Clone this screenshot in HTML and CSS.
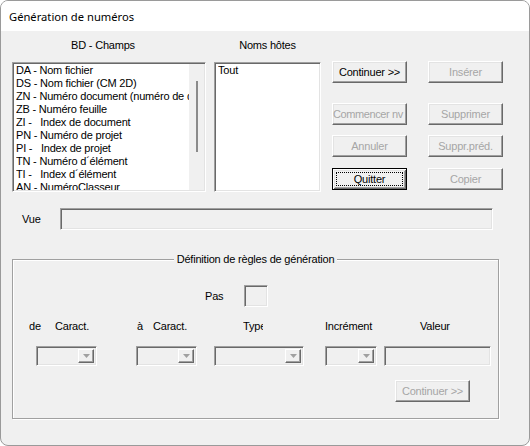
FILE: index.html
```html
<!DOCTYPE html>
<html lang="fr">
<head>
<meta charset="utf-8">
<title>Génération de numéros</title>
<link rel="stylesheet" href="styles.css">
</head>
<body>
<div class="window">
  <div class="titlebar">Génération de numéros</div>
  <div class="content">
    <div class="top">
      <div class="col col-fields">
        <div class="colhead colhead-fields">BD - Champs</div>
        <div class="listbox">
          <ul class="items">
            <li>DA - Nom fichier</li>
            <li>DS - Nom fichier (CM 2D)</li>
            <li>ZN - Numéro document (numéro de document)</li>
            <li>ZB - Numéro feuille</li>
            <li>ZI -   Index de document</li>
            <li>PN - Numéro de projet</li>
            <li>PI -   Index de projet</li>
            <li>TN - Numéro d´élément</li>
            <li>TI -   Index d´élément</li>
            <li>AN - NuméroClasseur</li>
          </ul>
          <div class="vscroll"><div class="thumb"></div></div>
        </div>
      </div>
      <div class="col col-hosts">
        <div class="colhead">Noms hôtes</div>
        <div class="listbox">
          <ul class="items">
            <li>Tout</li>
          </ul>
        </div>
      </div>
      <div class="actions">
        <div class="btn-row">
          <button class="btn">Continuer &gt;&gt;</button>
          <button class="btn" disabled>Insérer</button>
        </div>
        <div class="btn-row row-2">
          <button class="btn btn-tight" disabled>Commencer nv</button>
          <button class="btn" disabled>Supprimer</button>
        </div>
        <div class="btn-row row-3">
          <button class="btn" disabled>Annuler</button>
          <button class="btn" disabled>Suppr.préd.</button>
        </div>
        <div class="btn-row row-4">
          <button class="btn btn-default"><span class="focus">Quitter</span></button>
          <button class="btn" disabled>Copier</button>
        </div>
      </div>
    </div>

    <div class="vue-row">
      <span class="vue-label">Vue</span>
      <div class="field vue-field"></div>
    </div>

    <fieldset class="group">
      <legend>Définition de règles de génération</legend>
      <div class="pas-row">
        <span class="pas-label">Pas</span>
        <div class="field pas-field"></div>
      </div>
      <div class="labels">
        <span>de</span>
        <span>Caract.</span>
        <span>à</span>
        <span>Caract.</span>
        <span class="clip">Type</span>
        <span>Incrément</span>
        <span>Valeur</span>
      </div>
      <div class="combos">
        <div class="combo c1"><span class="drop"><svg width="7" height="4" viewBox="0 0 7 4"><polygon points="0,0 7,0 3.5,4" fill="#a0a0a0"/></svg></span></div>
        <div class="combo c2"><span class="drop"><svg width="7" height="4" viewBox="0 0 7 4"><polygon points="0,0 7,0 3.5,4" fill="#a0a0a0"/></svg></span></div>
        <div class="combo c3"><span class="drop"><svg width="7" height="4" viewBox="0 0 7 4"><polygon points="0,0 7,0 3.5,4" fill="#a0a0a0"/></svg></span></div>
        <div class="combo c4"><span class="drop"><svg width="7" height="4" viewBox="0 0 7 4"><polygon points="0,0 7,0 3.5,4" fill="#a0a0a0"/></svg></span></div>
        <div class="field valeur-field"></div>
      </div>
      <div class="group-foot">
        <button class="btn" disabled>Continuer &gt;&gt;</button>
      </div>
    </fieldset>
  </div>
</div>
</body>
</html>
```

FILE: styles.css
```css
html, body {
  margin: 0;
  padding: 0;
  background: #ffffff;
}

body {
  font-family: "Liberation Sans", Arial, sans-serif;
  font-size: 11px;
  letter-spacing: -0.2px;
  color: #000;
}

.window {
  width: 530px;
  height: 446px;
  box-sizing: border-box;
  border: 1px solid #9a9a9a;
  border-radius: 8px;
  overflow: hidden;
  background: #f0f0f0;
  display: flex;
  flex-direction: column;
}

.titlebar {
  flex: none;
  height: 30px;
  background: #ffffff;
  display: flex;
  align-items: center;
  padding-left: 8px;
  font-family: "Noto Sans", "Open Sans", sans-serif;
  font-size: 11.2px;
  letter-spacing: 0;
  color: #000;
}

.content {
  flex: 1;
  padding-left: 11px;
}

/* ---------- top area ---------- */
.top {
  display: flex;
  align-items: flex-start;
}

.col-fields { width: 194px; }
.col-hosts { width: 107px; margin-left: 8px; }

.colhead {
  height: 31px;
  box-sizing: border-box;
  padding-top: 8px;
  line-height: 13px;
  text-align: center;
}

.colhead-fields { padding-right: 12px; }

.listbox {
  height: 130px;
  box-sizing: border-box;
  background: #ffffff;
  border: 1px solid;
  border-color: #a0a0a0 #ffffff #ffffff #a0a0a0;
  box-shadow: inset 1px 1px 0 #696969, inset -1px -1px 0 #e3e3e3;
  padding: 1px;
  display: flex;
  overflow: hidden;
}

.items {
  list-style: none;
  margin: 0;
  padding: 0 0 0 2px;
  flex: 1;
  min-width: 0;
  overflow: hidden;
}

.items li {
  line-height: 13px;
  height: 13px;
  white-space: pre;
  overflow: hidden;
}

.vscroll {
  flex: none;
  width: 15px;
  background: #f0f0f0;
}

.thumb {
  margin: 17px 0 0 7px;
  width: 2px;
  height: 71px;
  background: #8b8b8b;
}

/* ---------- buttons ---------- */
.actions {
  margin-left: 11px;
  padding-top: 30px;
}

.btn-row {
  display: flex;
  gap: 21px;
}

.row-2 { margin-top: 20px; }
.row-3 { margin-top: 10px; }
.row-4 { margin-top: 11px; }

.btn {
  width: 75px;
  height: 22px;
  box-sizing: border-box;
  margin: 0;
  padding: 0;
  background: #f0f0f0;
  font-family: "Liberation Sans", Arial, sans-serif;
  font-size: 11px;
  letter-spacing: -0.2px;
  color: #000;
  border: 1px solid;
  border-color: #ffffff #696969 #696969 #ffffff;
  box-shadow: inset -1px -1px 0 #a0a0a0, inset 1px 1px 0 #e3e3e3;
  white-space: nowrap;
  overflow: hidden;
}

.btn:disabled { color: #a6a6a6; }

.btn-tight { letter-spacing: -0.4px; text-align: left; padding-left: 0; }

.btn-default {
  border: 1px solid #000;
  box-shadow: inset 1px 1px 0 #ffffff, inset -1px -1px 0 #696969,
              inset 2px 2px 0 #e3e3e3, inset -2px -2px 0 #a0a0a0;
}

.focus {
  display: block;
  margin: 0 3px;
  height: 14px;
  box-sizing: border-box;
  border: 1px dotted #000;
  line-height: 12px;
}

/* ---------- fields ---------- */
.field {
  box-sizing: border-box;
  background: #f0f0f0;
  border: 1px solid;
  border-color: #a0a0a0 #ffffff #ffffff #a0a0a0;
  box-shadow: inset 1px 1px 0 #696969, inset -1px -1px 0 #e3e3e3;
}

.vue-row {
  margin-top: 16px;
  display: flex;
  align-items: center;
  height: 22px;
}

.vue-label {
  width: 38px;
  padding-left: 10px;
}

.vue-field {
  width: 433px;
  height: 22px;
}

/* ---------- group box ---------- */
.group {
  margin: 22px 0 0 0;
  padding: 0;
  width: 487px;
  height: 167px;
  box-sizing: border-box;
  min-inline-size: 0;
  border: 1px solid #a0a0a0;
  box-shadow: 1px 1px 0 #ffffff, inset 1px 1px 0 #ffffff;
}

.group legend {
  margin: 0 auto;
  padding: 0 3px;
  line-height: 14px;
  background: #f0f0f0;
}

.pas-row {
  margin-top: 19px;
  display: flex;
  align-items: center;
  padding-left: 192px;
  height: 22px;
}

.pas-label { width: 39px; }

.pas-field {
  width: 24px;
  height: 22px;
}

.labels {
  margin-top: 13px;
  display: grid;
  grid-template-columns: 26px 82px 16px 90px 82px 95px auto;
  padding-left: 16px;
  line-height: 13px;
}

.labels .clip {
  width: 20px;
  overflow: hidden;
  white-space: nowrap;
}

.combos {
  margin-top: 13px;
  display: flex;
  padding-left: 23px;
  height: 20px;
}

.combo {
  height: 20px;
  box-sizing: border-box;
  background: #f0f0f0;
  border: 1px solid;
  border-color: #a0a0a0 #ffffff #ffffff #a0a0a0;
  box-shadow: inset 1px 1px 0 #696969, inset -1px -1px 0 #e3e3e3;
  padding: 2px;
  display: flex;
  justify-content: flex-end;
}

.drop {
  width: 16px;
  height: 14px;
  box-sizing: border-box;
  border: 1px solid;
  border-color: #ffffff #696969 #696969 #ffffff;
  box-shadow: inset -1px -1px 0 #a0a0a0;
  display: flex;
  align-items: center;
  justify-content: center;
}

.c1 { width: 61px; }
.c2 { width: 61px; margin-left: 39px; }
.c3 { width: 90px; margin-left: 17px; }
.c4 { width: 52px; margin-left: 21px; }

.valeur-field {
  width: 107px;
  height: 20px;
  margin-left: 7px;
}

.group-foot {
  margin-top: 14px;
  display: flex;
  justify-content: flex-end;
  padding-right: 28px;
}
```
